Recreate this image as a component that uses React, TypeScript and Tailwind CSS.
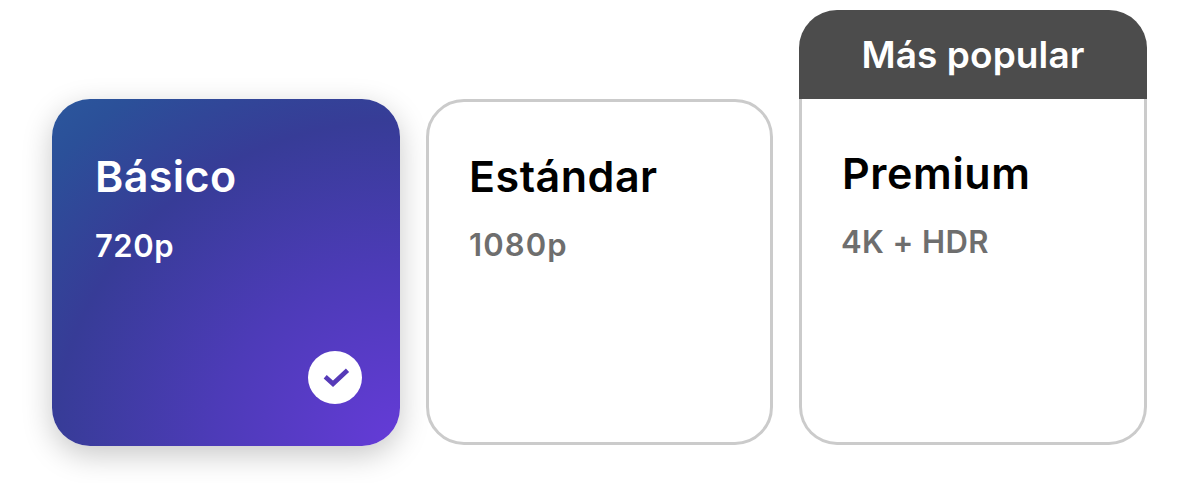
const cardText = 'font-semibold leading-none whitespace-nowrap';

function CheckBadge() {
	return (
		<svg
			viewBox="0 0 54 53"
			className="w-[54px] h-[53px] mr-[0.5px] self-end"
			aria-hidden="true"
		>
			<ellipse cx="27" cy="26.5" rx="27" ry="26.5" fill="#fff" />
			<path
				d="M17.2 25.8L25 32.8L39.5 19.2"
				fill="none"
				stroke="#563ab8"
				strokeWidth="4.6"
			/>
		</svg>
	);
}

function App() {
	return (
		<main className="flex items-start gap-[26px] w-[1199px] h-[483px] pt-[10px] pl-[52px] bg-white overflow-hidden font-['Inter','Liberation_Sans',sans-serif]">
			<section className="flex flex-col justify-between shrink-0 mt-[89px] w-[348px] h-[347px] rounded-[38px] pt-[56px] pb-[42px] pl-[43px] pr-[38px] text-white bg-[radial-gradient(140%_132%_at_100%_100%,#653bd8_0%,#4d3bb8_38%,#373c97_71%,#2b5099_94%,#2b549b_100%)] shadow-[0_9px_30px_rgba(0,0,0,0.22)]">
				<div>
					<h2 className={`${cardText} text-[43px] tracking-[0.4px]`}>Básico</h2>
					<p className={`${cardText} mt-[32px] text-[31px] tracking-[0.5px]`}>
						720p
					</p>
				</div>
				<CheckBadge />
			</section>
			<section className="shrink-0 mt-[89px] w-[347px] h-[346px] rounded-[38px] border-3 border-[#cbcbcb] pt-[53px] pl-[40px] bg-white">
				<h2 className={`${cardText} text-[43px] tracking-[0.5px] text-black`}>
					Estándar
				</h2>
				<p className={`${cardText} mt-[31px] text-[31px] tracking-[1.1px] text-[#6e6e6e]`}>
					1080p
				</p>
			</section>
			<section className="shrink-0 w-[348px]">
				<div className="flex items-center justify-center h-[89px] rounded-t-[38px] bg-[#4c4c4c] text-white">
					<span className={`${cardText} text-[37px] tracking-[0.1px]`}>
						Más popular
					</span>
				</div>
				<div className="h-[346px] rounded-b-[38px] border-3 border-t-0 border-[#cbcbcb] pt-[53px] pl-[40px] bg-white">
					<h2 className={`${cardText} text-[43px] tracking-[0.6px] text-black`}>
						Premium
					</h2>
					<p className={`${cardText} mt-[31px] -ml-px text-[31px] tracking-[0.4px] text-[#6e6e6e]`}>
						4K + HDR
					</p>
				</div>
			</section>
		</main>
	);
}

export default App;
